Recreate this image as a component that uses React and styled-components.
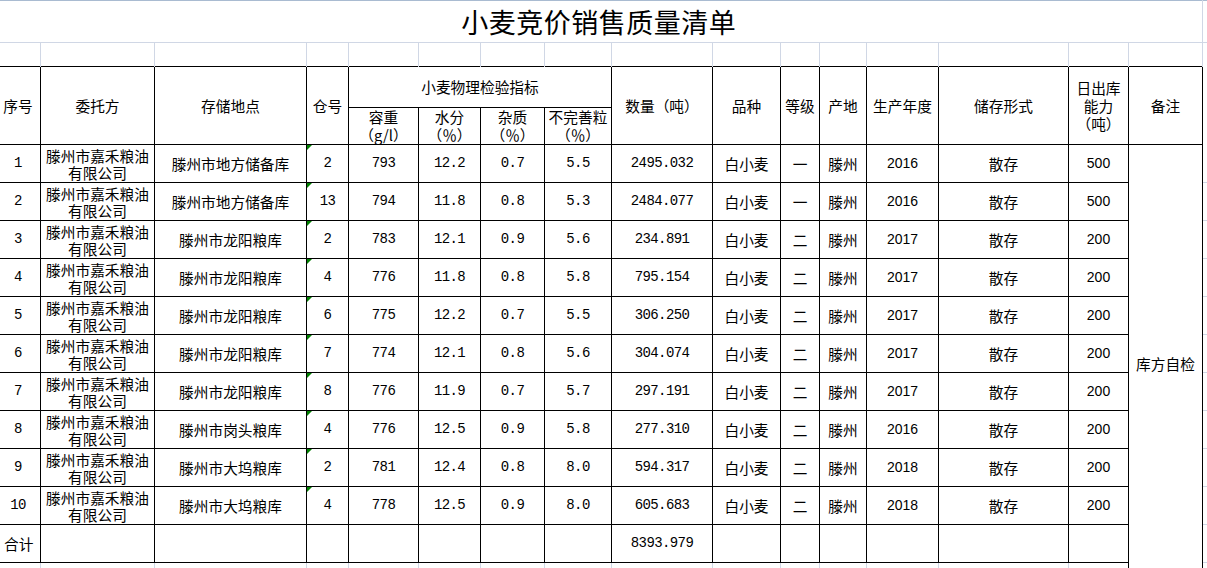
import React from "react";
import styled, { createGlobalStyle, css } from "styled-components";

const GRID = "#d0d7e5";

const GlobalStyle = createGlobalStyle`
  html, body {
    margin: 0;
    padding: 0;
    background: #fff;
    overflow: hidden;
  }
  body {
    font-family: "Noto Sans CJK SC", sans-serif;
    color: #000;
  }
`;

const Sheet = styled.div`
  margin-left: -5px;
  width: 1272px;
`;

const Grid = styled.table`
  table-layout: fixed;
  border-collapse: collapse;
  width: 1271px;
`;

const Col = styled.col`
  width: ${(p) => p.$w}px;
`;

const Row = styled.tr`
  height: ${(p) => p.$h}px;
`;

const TitleCell = styled.td`
  padding: 0;
  border-top: 1px solid #a9bbd1;
  border-right: 1px solid ${GRID};
  border-bottom: 1px solid ${GRID};
  text-align: center;
  vertical-align: middle;
  font-family: "Noto Sans CJK SC", sans-serif;
  font-size: 27px;
  line-height: 30px;
  letter-spacing: 0.5px;
`;

const BlankCell = styled.td`
  padding: 0;
  border-top: 1px solid #a9bbd1;
  border-bottom: 1px solid ${GRID};
`;

const GapCell = styled.td`
  padding: 0;
  border-right: 1px solid ${GRID};
`;

const SpareCell = styled.td`
  padding: 0;
  border-right: 1px solid ${GRID};
  border-bottom: 1px solid ${GRID};
`;

const Head = styled.th`
  padding: 0 2px;
  border: 1px solid #000;
  font-weight: normal;
  text-align: center;
  vertical-align: middle;
  font-family: "Noto Sans CJK SC", sans-serif;
  font-size: 14.7px;
  line-height: 18px;
  white-space: nowrap;
`;

const fonts = {
  cn: css`
    font-family: "Noto Sans CJK SC", sans-serif;
    font-size: 14.7px;
  `,
  num: css`
    font-family: "Liberation Mono", "Noto Sans CJK SC", monospace;
    font-size: 14px;
    letter-spacing: -0.6px;
  `,
  sans: css`
    font-family: "Liberation Sans", "Noto Sans CJK SC", sans-serif;
    font-size: 14px;
  `,
};

const Cell = styled.td`
  position: relative;
  padding: 0 2px;
  border: 1px solid #000;
  text-align: ${(p) => p.$align || "center"};
  vertical-align: middle;
  line-height: 17px;
  ${(p) => fonts[p.$kind || "cn"]}
  ${(p) =>
    p.$flag &&
    css`
      &::before {
        content: "";
        position: absolute;
        left: 0;
        top: 0;
        border-top: 5px solid #008000;
        border-right: 5px solid transparent;
      }
    `}
`;

const Total = styled(Cell)`
  padding-left: 8px;
`;

const widths = [45, 114, 152, 42, 70, 62, 64, 67, 101, 68, 39, 47, 72, 130, 60, 74, 64];

const COMPANY = "滕州市嘉禾粮油有限公司";

const rows = [
  ["1", "滕州市地方储备库", "2", "793", "12.2", "0.7", "5.5", "2495.032", "一", "2016", "500"],
  ["2", "滕州市地方储备库", "13", "794", "11.8", "0.8", "5.3", "2484.077", "一", "2016", "500"],
  ["3", "滕州市龙阳粮库", "2", "783", "12.1", "0.9", "5.6", "234.891", "二", "2017", "200"],
  ["4", "滕州市龙阳粮库", "4", "776", "11.8", "0.8", "5.8", "795.154", "二", "2017", "200"],
  ["5", "滕州市龙阳粮库", "6", "775", "12.2", "0.7", "5.5", "306.250", "二", "2017", "200"],
  ["6", "滕州市龙阳粮库", "7", "774", "12.1", "0.8", "5.6", "304.074", "二", "2017", "200"],
  ["7", "滕州市龙阳粮库", "8", "776", "11.9", "0.7", "5.7", "297.191", "二", "2017", "200"],
  ["8", "滕州市岗头粮库", "4", "776", "12.5", "0.9", "5.8", "277.310", "二", "2016", "200"],
  ["9", "滕州市大坞粮库", "2", "781", "12.4", "0.8", "8.0", "594.317", "二", "2018", "200"],
  ["10", "滕州市大坞粮库", "4", "778", "12.5", "0.9", "8.0", "605.683", "二", "2018", "200"],
];

const SpareRow = ({ count }) => (
  <Row $h={20}>
    {Array.from({ length: count }).map((_, i) => (
      <SpareCell key={i} />
    ))}
  </Row>
);

export default function App() {
  return (
    <Sheet>
      <GlobalStyle />
      <Grid>
        <colgroup>
          {widths.map((w, i) => (
            <Col key={i} $w={w} />
          ))}
        </colgroup>
        <tbody>
          <Row $h={42}>
            <TitleCell colSpan={16}>小麦竞价销售质量清单</TitleCell>
            <BlankCell />
          </Row>
          <Row $h={24}>
            {widths.map((_, i) => (
              <GapCell key={i} />
            ))}
          </Row>
          <Row $h={41}>
            <Head rowSpan={2}>序号</Head>
            <Head rowSpan={2}>委托方</Head>
            <Head rowSpan={2}>存储地点</Head>
            <Head rowSpan={2}>仓号</Head>
            <Head colSpan={4}>小麦物理检验指标</Head>
            <Head rowSpan={2}>数量（吨）</Head>
            <Head rowSpan={2}>品种</Head>
            <Head rowSpan={2}>等级</Head>
            <Head rowSpan={2}>产地</Head>
            <Head rowSpan={2}>生产年度</Head>
            <Head rowSpan={2}>储存形式</Head>
            <Head rowSpan={2}>
              日出库
              <br />
              能力
              <br />
              （吨）
            </Head>
            <Head rowSpan={2}>备注</Head>
            <GapCell rowSpan={2} />
          </Row>
          <Row $h={36}>
            <Head>
              容重
              <br />
              （g/l）
            </Head>
            <Head>
              水分
              <br />
              （％）
            </Head>
            <Head>
              杂质
              <br />
              （％）
            </Head>
            <Head>
              不完善粒
              <br />
              （％）
            </Head>
          </Row>
          {rows.map((r, i) => (
            <Row key={r[0]} $h={38}>
              <Cell $kind="num">{r[0]}</Cell>
              <Cell>{COMPANY}</Cell>
              <Cell>{r[1]}</Cell>
              <Cell $kind="num" $flag>
                {r[2]}
              </Cell>
              <Cell $kind="num">{r[3]}</Cell>
              <Cell $kind="num">{r[4]}</Cell>
              <Cell $kind="num">{r[5]}</Cell>
              <Cell $kind="num">{r[6]}</Cell>
              <Cell $kind="num">{r[7]}</Cell>
              <Cell>白小麦</Cell>
              <Cell>{r[8]}</Cell>
              <Cell>滕州</Cell>
              <Cell $kind="sans">{r[9]}</Cell>
              <Cell>散存</Cell>
              <Cell $kind="sans">{r[10]}</Cell>
              {i === 0 && <Cell rowSpan={12}>库方自检</Cell>}
              <SpareCell />
            </Row>
          ))}
          <Row $h={38}>
            <Total $align="left">合计</Total>
            <Cell />
            <Cell />
            <Cell />
            <Cell />
            <Cell />
            <Cell />
            <Cell />
            <Cell $kind="num">8393.979</Cell>
            <Cell />
            <Cell />
            <Cell />
            <Cell />
            <Cell />
            <Cell />
            <SpareCell />
          </Row>
          <SpareRow count={16} />
        </tbody>
      </Grid>
    </Sheet>
  );
}
